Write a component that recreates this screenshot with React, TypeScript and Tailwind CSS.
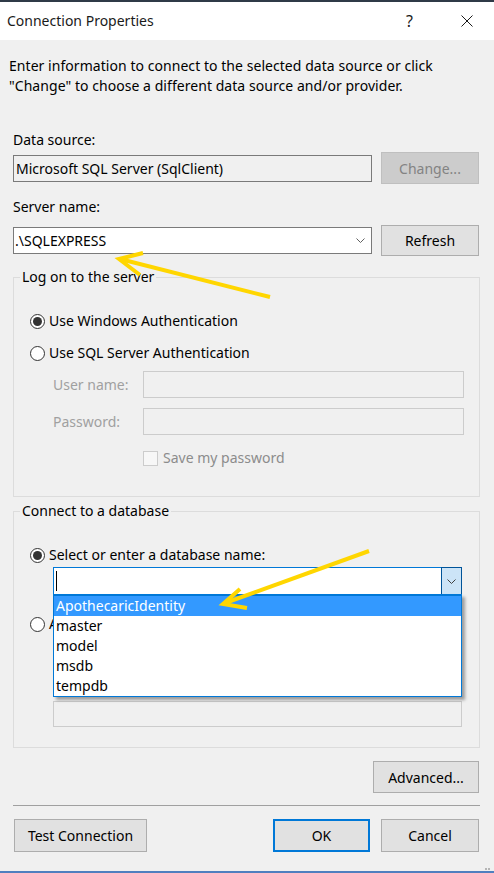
import React from 'react'

const FONT = "font-['Noto_Sans',sans-serif]"

function Chevron({ className = '' }: { className?: string }) {
  return (
    <svg width="9" height="5" viewBox="0 0 9 5" className={className}>
      <polyline points="0.5,0.5 4.5,4.5 8.5,0.5" fill="none" stroke="currentColor" strokeWidth="1" />
    </svg>
  )
}

function Radio({ checked, label }: { checked: boolean; label: string }) {
  return (
    <div className="flex items-center h-[20px] gap-[4px]">
      <span className="w-[15px] h-[15px] rounded-full border border-[#333333] bg-white flex items-center justify-center shrink-0">
        {checked && <span className="w-[9px] h-[9px] rounded-full bg-[#333333]" />}
      </span>
      <span className="leading-[20px] whitespace-nowrap">{label}</span>
    </div>
  )
}

function Btn({ children, className = '', disabled = false, primary = false }: {
  children?: React.ReactNode; className?: string; disabled?: boolean; primary?: boolean
}) {
  const base = disabled
    ? 'bg-[#cccccc] border border-[#bfbfbf] text-[#838383]'
    : primary
      ? 'bg-[#e1e1e1] border-2 border-[#0078d7] text-black'
      : 'bg-[#e1e1e1] border border-[#adadad] text-black'
  return (
    <button className={`flex items-center justify-center shrink-0 ${base} ${className}`}>{children}</button>
  )
}

const DATABASES = ['ApothecaricIdentity', 'master', 'model', 'msdb', 'tempdb']

export default function App() {
  return (
    <div className={`relative w-[494px] h-[873px] bg-[#f0f0f0] flex flex-col overflow-hidden text-[14px] text-black ${FONT}`}>
      {/* window frame top */}
      <div className="h-[2px] bg-[#2f3a47]" />

      {/* Title bar */}
      <div className="h-[38px] bg-white flex items-center pl-[7px]">
        <span className="text-[14px] text-[#1a1a1a] leading-[20px]">Connection Properties</span>
        <span className="ml-auto mr-[48px] text-[16px] leading-[20px] text-[#1a1a1a]">?</span>
        <svg width="12" height="12" viewBox="0 0 12 12" className="mr-[21px]">
          <path d="M0.5 0.5 L11.5 11.5 M11.5 0.5 L0.5 11.5" stroke="#1a1a1a" strokeWidth="1" />
        </svg>
      </div>

      {/* Body */}
      <div className="flex-1 flex flex-col pl-[13px] pr-[14px] pt-[16px]">
        <p className="leading-[20px] -ml-[4px] tracking-[0.05px]">
          Enter information to connect to the selected data source or click<br />
          "Change" to choose a different data source and/or provider.
        </p>

        <div className="mt-[34px] leading-[20px]">Data source:</div>
        <div className="mt-[2px] flex items-center gap-[9px] h-[32px]">
          <div className="w-[359px] h-[27px] border border-[#7a7a7a] bg-[#f0f0f0] pl-[2px] flex items-center whitespace-nowrap">
            Microsoft SQL Server (SqlClient)
          </div>
          <Btn disabled className="w-[98px] h-[32px]">Change...</Btn>
        </div>

        <div className="mt-[13px] leading-[20px]">Server name:</div>
        <div className="mt-[8px] flex items-center gap-[9px] h-[31px]">
          <div className="w-[359px] h-[27px] border border-[#7a7a7a] bg-white pl-[1px] pr-[6px] flex items-center">
            <span>.\SQLEXPRESS</span>
            <Chevron className="ml-auto text-[#606060]" />
          </div>
          <Btn className="w-[98px] h-[31px]">Refresh</Btn>
        </div>

        {/* Log on to the server */}
        <fieldset className="mt-[11px] border border-[#dcdcdc]">
          <legend className="ml-[6px] px-[2px] leading-[20px]">Log on to the server</legend>
          <div className="flex flex-col pl-[16px] pr-[15px] pt-[24px] pb-[28px]">
            <Radio checked label="Use Windows Authentication" />
            <div className="mt-[12px]"><Radio checked={false} label="Use SQL Server Authentication" /></div>
            <div className="mt-[8px] ml-[23px] flex items-center">
              <span className="w-[90px] text-[#a0a0a0]">User name:</span>
              <div className="flex-1 h-[27px] border border-[#cccccc] bg-[#f0f0f0]" />
            </div>
            <div className="mt-[10px] ml-[23px] flex items-center">
              <span className="w-[90px] text-[#a0a0a0]">Password:</span>
              <div className="flex-1 h-[27px] border border-[#cccccc] bg-[#f0f0f0]" />
            </div>
            <div className="mt-[13px] ml-[113px] flex items-center gap-[5px] h-[20px]">
              <span className="w-[15px] h-[15px] border border-[#cccccc] bg-[#f7f7f7]" />
              <span className="text-[#8c8c8c] leading-[20px]">Save my password</span>
            </div>
          </div>
        </fieldset>

        {/* Connect to a database */}
        <fieldset className="mt-[4px] border border-[#dcdcdc]">
          <legend className="ml-[6px] px-[2px] leading-[20px]">Connect to a database</legend>
          <div className="flex flex-col pl-[16px] pr-[17px] pt-[24px] pb-[20px]">
            <Radio checked label="Select or enter a database name:" />
            <div className="relative mt-[2px] ml-[23px] w-[409px] h-[28px] border border-[#0078d7] bg-white flex items-stretch">
              <div className="flex-1 flex items-center pl-[2px]">
                <span className="w-px h-[20px] bg-black" />
              </div>
              <div className="w-[21px] -my-px -mr-px bg-[#cce4f7] border border-[#005499] flex items-center justify-center">
                <Chevron className="text-[#404040]" />
              </div>

              {/* open drop-down list */}
              <ul className="absolute z-10 left-[-1px] top-full w-[409px] bg-white border border-t-2 border-[#0078d7] shadow-[3px_3px_3px_rgba(0,0,0,0.35)]">
                {DATABASES.map((db, i) => (
                  <li
                    key={db}
                    className={`h-[20px] leading-[20px] pl-[2px] ${i === 0 ? 'bg-[#3399ff] text-white' : ''}`}
                  >
                    {db}
                  </li>
                ))}
              </ul>
            </div>
            <div className="mt-[19px]"><Radio checked={false} label="A" /></div>
            {/* file path row, hidden behind the open list */}
            <div className="mt-[3px] ml-[23px] flex items-center gap-[8px] h-[32px]">
              <div className="flex-1 h-[26px] border border-[#cccccc] bg-[#f0f0f0]" />
              <Btn className="w-[82px] h-[32px]" />
            </div>
            <div className="mt-[4px] h-[20px]" />
            <div className="mt-[8px] ml-[23px] w-[409px] h-[26px] border border-[#cccccc] bg-[#f0f0f0]" />
          </div>
        </fieldset>

        <Btn className="mt-[13px] self-end mr-[1px] w-[106px] h-[32px]">Advanced...</Btn>

        <div className="mt-[12px] h-px bg-[#a0a0a0]" />

        <div className="mt-[13px] flex items-center">
          <Btn className="ml-[1px] w-[133px] h-[33px]">Test Connection</Btn>
          <Btn primary className="ml-auto w-[97px] h-[33px]">OK</Btn>
          <Btn className="ml-[11px] mr-[1px] w-[98px] h-[33px]">Cancel</Btn>
        </div>
      </div>

      {/* window frame bottom with size grip */}
      <div className="relative h-[2px] bg-[#4f7fbf]">
        <div className="absolute right-[4px] bottom-[3px] flex gap-[1px]">
          <span className="w-[2px] h-[2px] bg-[#b5b5b5]" />
          <span className="w-[2px] h-[2px] bg-[#b5b5b5]" />
        </div>
      </div>

      {/* yellow annotation arrows */}
      <svg className="absolute inset-0 pointer-events-none z-20" width="494" height="873" viewBox="0 0 494 873">
        <g stroke="#ffd600" strokeWidth="4" fill="none" strokeLinejoin="miter">
          <line x1="270" y1="297" x2="120" y2="259" />
          <polyline points="143,253 119,259 140,275" />
          <line x1="369" y1="551" x2="225" y2="603" />
          <polyline points="240,589 223,604 247,608" />
        </g>
      </svg>
    </div>
  )
}
